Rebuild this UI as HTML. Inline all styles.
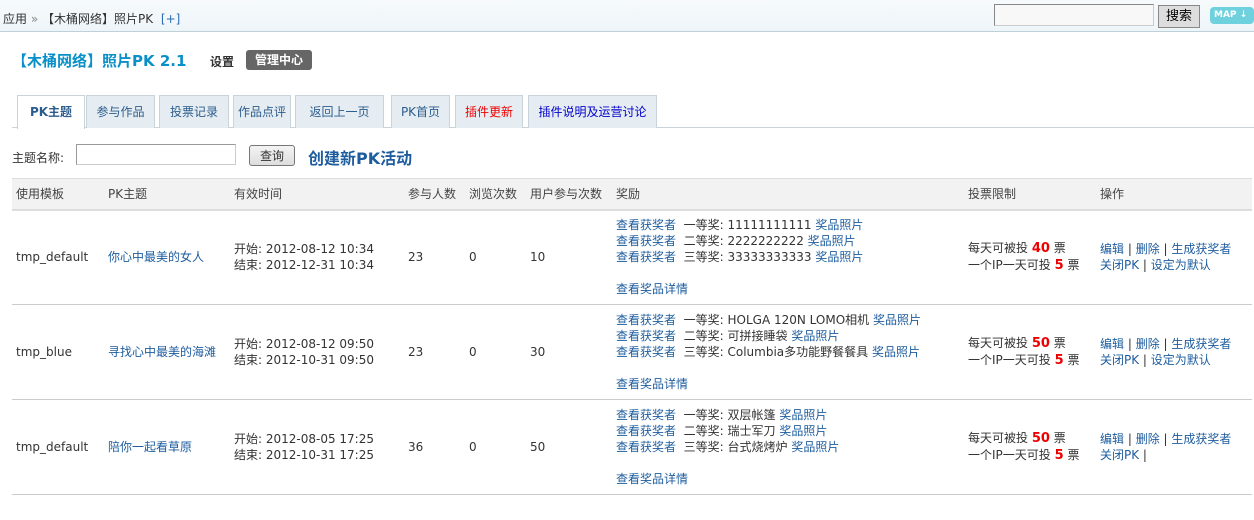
<!DOCTYPE html>
<html><head><meta charset="utf-8"><style>
*{margin:0;padding:0;box-sizing:border-box}
body{width:1254px;height:520px;background:#fff;font:12px "DejaVu Sans","Noto Sans CJK SC",sans-serif;color:#333;position:relative;overflow:hidden}
a{color:#1d5c9e;text-decoration:none}
.top{position:absolute;left:0;top:0;width:1254px;height:32px;background:linear-gradient(#f6fafc,#eef5f9);border-bottom:1px solid #bfd0da}
.abs{position:absolute;white-space:nowrap}
.tab{position:absolute;top:95px;height:33px;background:#e6edf2;border:1px solid #c9d3da;border-bottom:none;line-height:32px;text-align:center;font-size:12px;color:#2b5c8c}
table{position:absolute;left:12px;top:178px;border-collapse:collapse;width:1240px;table-layout:fixed}
th{background:#f2f2f2;height:31px;font-weight:normal;text-align:left;padding-left:4px;border-top:1px solid #ddd;border-bottom:2px solid #ddd;color:#444}
td{height:95px;padding-left:4px;border-bottom:1px solid #ccc;line-height:16px;vertical-align:middle;white-space:nowrap}
.r{color:#e00;font-weight:bold;font-size:13px}
</style></head><body>
<div class="top"></div>
<div class="abs" style="left:3px;top:10px;color:#333">应用 <span style="color:#888">»</span> 【木桶网络】照片PK <a style="color:#2b6cb0;margin-left:4px">[+]</a></div>
<div class="abs" style="left:994px;top:4px;width:160px;height:22px;border:1px solid #888;border-right-color:#ccc;border-bottom-color:#ccc;background:#f8f8f8"></div>
<div class="abs" style="left:1158px;top:5px;width:42px;height:23px;border:1px solid #888;background:#ddd;text-align:center;line-height:21px;font-size:13px;color:#000">搜索</div>
<div class="abs" style="left:1210px;top:7px;width:44px;height:17px;border-radius:4px;background:#6fd0de;color:#fff;font-weight:bold;font-size:9px;line-height:17px;padding-left:4px">MAP ↓</div>
<div class="abs" style="left:12px;top:50px;font-size:15px;font-weight:bold;color:#0a90c8">【木桶网络】照片PK 2.1</div>
<div class="abs" style="left:210px;top:53px;font-weight:bold;color:#333">设置</div>
<div class="abs" style="left:246px;top:50px;width:66px;height:20px;background:#666;color:#fff;border-radius:3px;font-weight:bold;text-align:center;line-height:20px">管理中心</div>
<div class="abs" style="left:12px;top:127px;width:1242px;border-top:1px solid #c9d3da"></div>
<div class="tab" style="left:17px;width:68px;background:#fff;font-weight:bold;height:34px">PK主题</div>
<div class="tab" style="left:86px;width:69px">参与作品</div>
<div class="tab" style="left:159px;width:70px">投票记录</div>
<div class="tab" style="left:233px;width:58px">作品点评</div>
<div class="tab" style="left:295px;width:89px">返回上一页</div>
<div class="tab" style="left:391px;width:59px">PK首页</div>
<div class="tab" style="left:455px;width:68px;color:#e00">插件更新</div>
<div class="tab" style="left:528px;width:129px;color:#00c">插件说明及运营讨论</div>
<div class="abs" style="left:12px;top:149px">主题名称:</div>
<div class="abs" style="left:76px;top:144px;width:160px;height:21px;border:1px solid #999;border-right-color:#ccc;border-bottom-color:#ccc"></div>
<div class="abs" style="left:249px;top:145px;width:46px;height:21px;border:1px solid #777;border-radius:3px;background:linear-gradient(#f4f4f4,#ddd);text-align:center;line-height:20px">查询</div>
<div class="abs" style="left:308px;top:145px;font-size:16px;font-weight:bold;color:#1d5c9e">创建新PK活动</div>
<table>
<colgroup><col style="width:92px"><col style="width:126px"><col style="width:174px"><col style="width:61px"><col style="width:61px"><col style="width:86px"><col style="width:352px"><col style="width:132px"><col style="width:156px"></colgroup>
<tr><th>使用模板</th><th>PK主题</th><th>有效时间</th><th>参与人数</th><th>浏览次数</th><th>用户参与次数</th><th>奖励</th><th>投票限制</th><th>操作</th></tr>
<tr><td>tmp_default</td><td><a>你心中最美的女人</a></td><td>开始: 2012-08-12 10:34<br>结束: 2012-12-31 10:34</td><td>23</td><td>0</td><td>10</td>
<td><a>查看获奖者</a>&nbsp; 一等奖: 11111111111 <a>奖品照片</a><br><a>查看获奖者</a>&nbsp; 二等奖: 2222222222 <a>奖品照片</a><br><a>查看获奖者</a>&nbsp; 三等奖: 33333333333 <a>奖品照片</a><br>&nbsp;<br><a>查看奖品详情</a></td>
<td>每天可被投 <span class="r">40</span> 票<br>一个IP一天可投 <span class="r">5</span> 票</td><td><a>编辑</a> | <a>删除</a> | <a>生成获奖者</a><br><a>关闭PK</a> | <a>设定为默认</a></td></tr>
<tr><td>tmp_blue</td><td><a>寻找心中最美的海滩</a></td><td>开始: 2012-08-12 09:50<br>结束: 2012-10-31 09:50</td><td>23</td><td>0</td><td>30</td>
<td><a>查看获奖者</a>&nbsp; 一等奖: HOLGA 120N LOMO相机 <a>奖品照片</a><br><a>查看获奖者</a>&nbsp; 二等奖: 可拼接睡袋 <a>奖品照片</a><br><a>查看获奖者</a>&nbsp; 三等奖: Columbia多功能野餐餐具 <a>奖品照片</a><br>&nbsp;<br><a>查看奖品详情</a></td>
<td>每天可被投 <span class="r">50</span> 票<br>一个IP一天可投 <span class="r">5</span> 票</td><td><a>编辑</a> | <a>删除</a> | <a>生成获奖者</a><br><a>关闭PK</a> | <a>设定为默认</a></td></tr>
<tr><td>tmp_default</td><td><a>陪你一起看草原</a></td><td>开始: 2012-08-05 17:25<br>结束: 2012-10-31 17:25</td><td>36</td><td>0</td><td>50</td>
<td><a>查看获奖者</a>&nbsp; 一等奖: 双层帐篷 <a>奖品照片</a><br><a>查看获奖者</a>&nbsp; 二等奖: 瑞士军刀 <a>奖品照片</a><br><a>查看获奖者</a>&nbsp; 三等奖: 台式烧烤炉 <a>奖品照片</a><br>&nbsp;<br><a>查看奖品详情</a></td>
<td>每天可被投 <span class="r">50</span> 票<br>一个IP一天可投 <span class="r">5</span> 票</td><td><a>编辑</a> | <a>删除</a> | <a>生成获奖者</a><br><a>关闭PK</a> |</td></tr>
</table>
</body></html>
